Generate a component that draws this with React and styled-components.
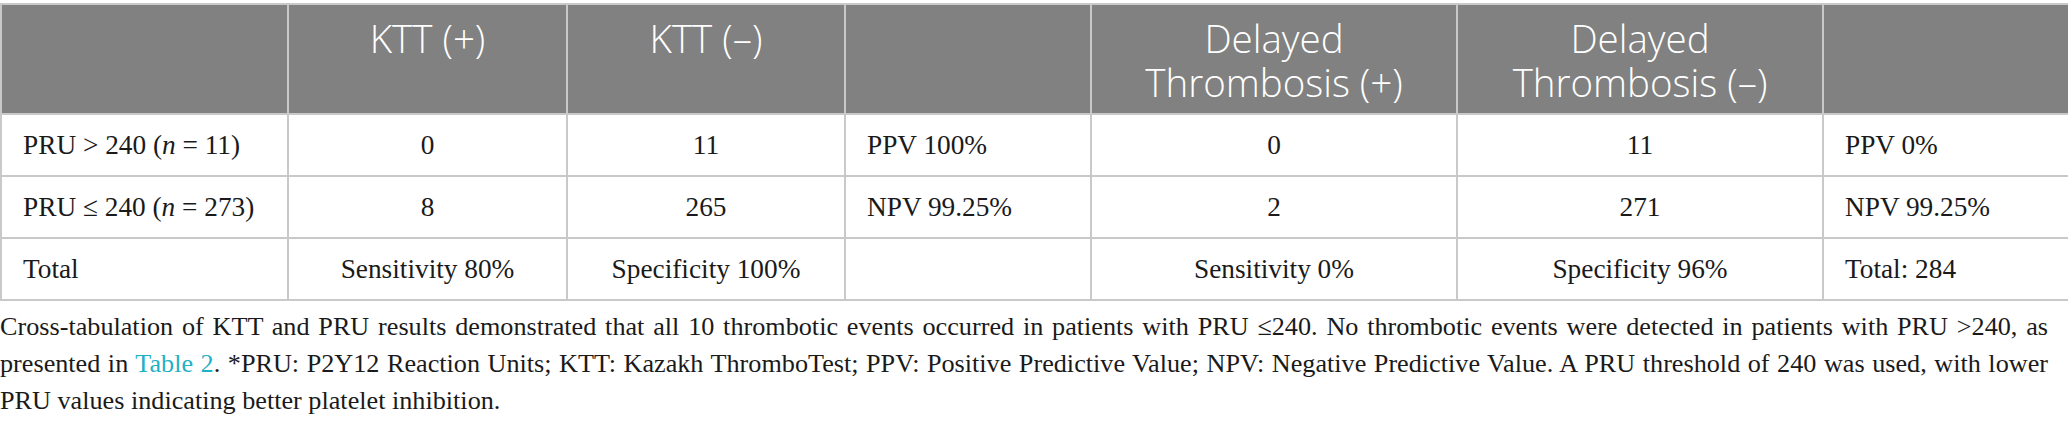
import React from "react";
import styled, { createGlobalStyle } from "styled-components";

const Global = createGlobalStyle`
  html, body { margin: 0; padding: 0; background: #ffffff; }
  body { font-family: "Liberation Serif", "Times New Roman", serif; color: #1a1a1a; }
`;

const Wrap = styled.div`
  width: 2068px;
  padding-top: 3px;
  box-sizing: border-box;
`;

const Table = styled.table`
  width: 2068px;
  border-collapse: collapse;
  table-layout: fixed;
`;

const HeadCell = styled.th`
  background: #808180;
  color: #ffffff;
  font-family: "Open Sans", "DejaVu Sans", sans-serif;
  font-weight: 300;
  font-size: 38.5px;
  line-height: 44px;
  text-align: center;
  vertical-align: top;
  padding: 11px 21px 9px;
  border: 2px solid #c9c9c9;
`;

const Cell = styled.td`
  font-size: 27.3px;
  line-height: 40px;
  padding: 10px 21px 10px;
  border: 2px solid #c9c9c9;
  text-align: ${(p) => (p.$center ? "center" : "left")};
  vertical-align: middle;
  color: #1a1a1a;
`;

const Caption = styled.p`
  width: 2048px;
  margin: 7px 0 0;
  font-size: 26.2px;
  line-height: 37px;
  text-align: justify;
  color: #1a1a1a;
`;

const Link = styled.a`
  color: #1fb1c6;
  text-decoration: none;
`;

const cols = [287, 279, 278, 246, 366, 366, 246];

const heads = ["", "KTT (+)", "KTT (–)", "", "Delayed Thrombosis (+)", "Delayed Thrombosis (–)", ""];

const rows = [
  [
    <>PRU &gt; 240 (<i>n</i> = 11)</>,
    "0",
    "11",
    "PPV 100%",
    "0",
    "11",
    "PPV 0%",
  ],
  [
    <>PRU ≤ 240 (<i>n</i> = 273)</>,
    "8",
    "265",
    "NPV 99.25%",
    "2",
    "271",
    "NPV 99.25%",
  ],
  ["Total", "Sensitivity 80%", "Specificity 100%", "", "Sensitivity 0%", "Specificity 96%", "Total: 284"],
];

const centered = [false, true, true, false, true, true, false];

export default function App() {
  return (
    <>
      <Global />
      <Wrap>
        <Table>
          <colgroup>
            {cols.map((w, i) => (
              <col key={i} style={{ width: w }} />
            ))}
          </colgroup>
          <thead>
            <tr>
              {heads.map((h, i) => (
                <HeadCell key={i}>{h}</HeadCell>
              ))}
            </tr>
          </thead>
          <tbody>
            {rows.map((r, ri) => (
              <tr key={ri}>
                {r.map((c, ci) => (
                  <Cell key={ci} $center={centered[ci]}>
                    {c}
                  </Cell>
                ))}
              </tr>
            ))}
          </tbody>
        </Table>
        <Caption>
          Cross-tabulation of KTT and PRU results demonstrated that all 10 thrombotic events occurred in
          patients with PRU ≤240. No thrombotic events were detected in patients with PRU &gt;240, as presented
          in <Link href="#">Table 2</Link>. *PRU: P2Y12 Reaction Units; KTT: Kazakh ThromboTest; PPV: Positive
          Predictive Value; NPV: Negative Predictive Value. A PRU threshold of 240 was used, with lower PRU
          values indicating better platelet inhibition.
        </Caption>
      </Wrap>
    </>
  );
}
